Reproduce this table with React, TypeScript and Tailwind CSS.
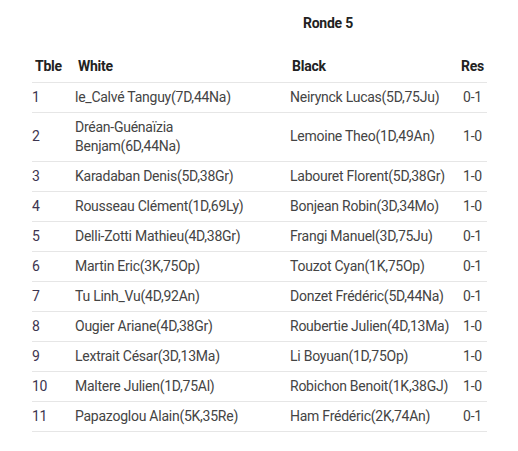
const rows: [string, string, string, string][] = [
  ['1', 'le_Calvé Tanguy(7D,44Na)', 'Neirynck Lucas(5D,75Ju)', '0-1'],
  ['2', 'Dréan-Guénaïzia Benjam(6D,44Na)', 'Lemoine Theo(1D,49An)', '1-0'],
  ['3', 'Karadaban Denis(5D,38Gr)', 'Labouret Florent(5D,38Gr)', '1-0'],
  ['4', 'Rousseau Clément(1D,69Ly)', 'Bonjean Robin(3D,34Mo)', '1-0'],
  ['5', 'Delli-Zotti Mathieu(4D,38Gr)', 'Frangi Manuel(3D,75Ju)', '0-1'],
  ['6', 'Martin Eric(3K,75Op)', 'Touzot Cyan(1K,75Op)', '0-1'],
  ['7', 'Tu Linh_Vu(4D,92An)', 'Donzet Frédéric(5D,44Na)', '0-1'],
  ['8', 'Ougier Ariane(4D,38Gr)', 'Roubertie Julien(4D,13Ma)', '1-0'],
  ['9', 'Lextrait César(3D,13Ma)', 'Li Boyuan(1D,75Op)', '1-0'],
  ['10', 'Maltere Julien(1D,75Al)', 'Robichon Benoit(1K,38GJ)', '1-0'],
  ['11', 'Papazoglou Alain(5K,35Re)', 'Ham Frédéric(2K,74An)', '0-1'],
];

export default function App() {
  return (
    <div className="w-[518px] h-[451px] bg-white pl-[32px] pt-[13px] font-['Roboto',sans-serif] text-[14px] leading-[19px] tracking-[-0.25px]">
      {/* Title */}
      <div className="pl-[271px] h-[20px] leading-[20px] font-bold text-[#222]">Ronde 5</div>

      <table className="mt-[19px] w-[455px] table-fixed border-collapse">
        <colgroup>
          <col className="w-[43px]" />
          <col className="w-[215px]" />
          <col className="w-[168px]" />
          <col className="w-[29px]" />
        </colgroup>
        <thead>
          <tr className="border-b border-[#e6e6e6] h-[30px]">
            <th className="text-left font-bold text-[#222] pl-[3px] py-[5px]">Tble</th>
            <th className="text-left font-bold text-[#222] pl-[3px] py-[5px]">White</th>
            <th className="text-left font-bold text-[#222] pl-[2px] py-[5px]">Black</th>
            <th className="text-center font-bold text-[#222] py-[5px]">Res</th>
          </tr>
        </thead>
        <tbody>
          {rows.map(([t, w, b, r]) => (
            <tr key={t} className="border-b border-[#e6e6e6]">
              <td className="py-[5px] text-[#3d3550] align-middle">{t}</td>
              <td className="py-[5px] pr-[30px] text-[#444] align-middle">{w}</td>
              <td className="py-[5px] text-[#444] align-middle">{b}</td>
              <td className="py-[5px] text-center text-[#444] align-middle">{r}</td>
            </tr>
          ))}
        </tbody>
      </table>
    </div>
  );
}
